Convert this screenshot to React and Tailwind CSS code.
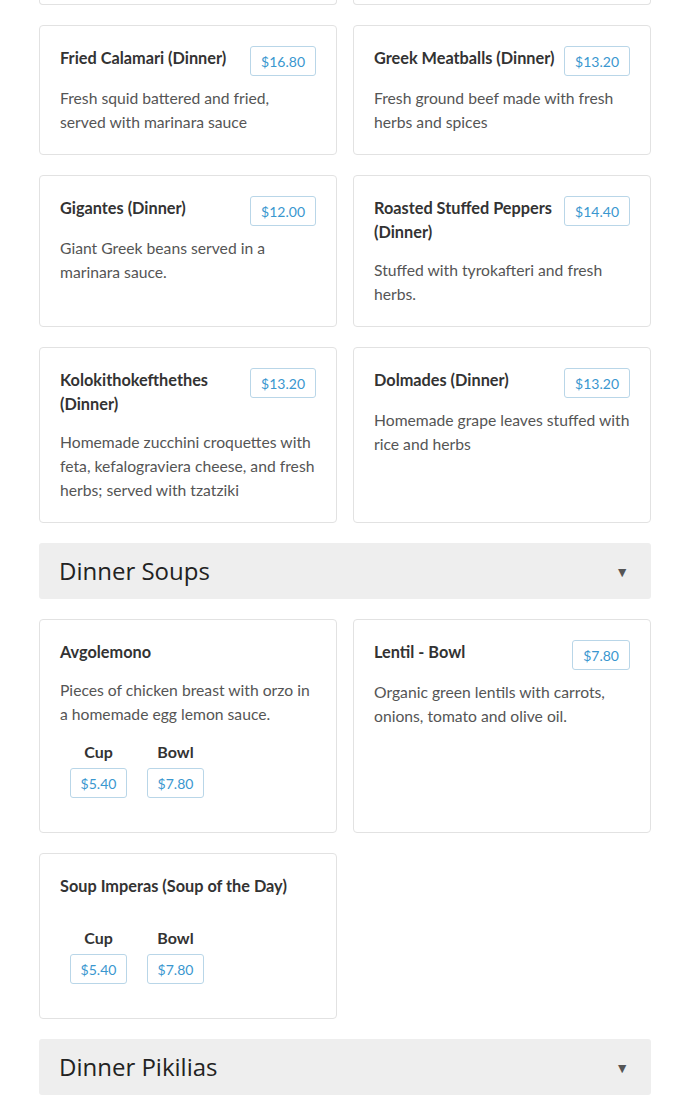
import React from "react";

const dinnerItems = [
	{ name: "Fried Calamari (Dinner)", price: "$16.80", desc: "Fresh squid battered and fried, served with marinara sauce" },
	{ name: "Greek Meatballs (Dinner)", price: "$13.20", desc: "Fresh ground beef made with fresh herbs and spices" },
	{ name: "Gigantes (Dinner)", price: "$12.00", desc: "Giant Greek beans served in a marinara sauce." },
	{ name: "Roasted Stuffed Peppers (Dinner)", price: "$14.40", desc: "Stuffed with tyrokafteri and fresh herbs." },
	{ name: "Kolokithokefthethes (Dinner)", price: "$13.20", desc: "Homemade zucchini croquettes with feta, kefalograviera cheese, and fresh herbs; served with tzatziki" },
	{ name: "Dolmades (Dinner)", price: "$13.20", desc: "Homemade grape leaves stuffed with rice and herbs" },
];

const soupItems = [
	{
		name: "Avgolemono",
		desc: "Pieces of chicken breast with orzo in a homemade egg lemon sauce.",
		sizes: [
			{ label: "Cup", price: "$5.40" },
			{ label: "Bowl", price: "$7.80" },
		],
	},
	{ name: "Lentil - Bowl", price: "$7.80", desc: "Organic green lentils with carrots, onions, tomato and olive oil." },
	{
		name: "Soup Imperas (Soup of the Day)",
		desc: "",
		sizes: [
			{ label: "Cup", price: "$5.40" },
			{ label: "Bowl", price: "$7.80" },
		],
	},
];

const Price = ({ children }) => (
	<span className="inline-flex h-[30px] items-center justify-center rounded-[3px] border border-[#b9d6e8] px-[10px] text-[14px] text-[#3a97cf] whitespace-nowrap">
		{children}
	</span>
);

const ItemCard = ({ item }) => (
	<div className="rounded-[4px] border border-[#e2e2e2] bg-white px-[20px] pt-[20px] pb-[20px]">
		<div className="flex items-start justify-between gap-[8px]">
			<h3 className="text-[16.3px] font-bold leading-[24px] text-[#333]">{item.name}</h3>
			{item.price && (
				<div className="-mb-[4px] shrink-0">
					<Price>{item.price}</Price>
				</div>
			)}
		</div>
		{item.desc ? (
			<p className="mt-[14px] text-[15.7px] leading-[24px] text-[#555]">{item.desc}</p>
		) : (
			<div className="h-[14px]" />
		)}
		{item.sizes && (
			<div className="mt-[14px] mb-[14px] flex gap-[20px] pl-[10px]">
				{item.sizes.map((s) => (
					<div key={s.label} className="flex w-[57px] flex-col items-center">
						<span className="text-[16px] font-bold leading-[24px] text-[#333]">{s.label}</span>
						<div className="mt-[4px]">
							<Price>{s.price}</Price>
						</div>
					</div>
				))}
			</div>
		)}
	</div>
);

const SectionHeader = ({ title }) => (
	<div className="flex h-[56px] items-center justify-between rounded-[3px] bg-[#eeeeee] pl-[20px] pr-[22px]">
		<h2 className="text-[24px] font-medium leading-none text-[#222]" style={{ fontFamily: '"Open Sans", sans-serif' }}>
			{title}
		</h2>
		<span className="text-[14px] text-[#555]">▼</span>
	</div>
);

export default function App() {
	return (
		<div className="min-h-screen bg-white" style={{ fontFamily: "Lato, 'Liberation Sans', sans-serif" }}>
			<div className="ml-[39px] w-[612px]">
				<div className="grid grid-cols-2 gap-x-[16px]">
					<div className="h-[5px] rounded-b-[4px] border border-t-0 border-[#e2e2e2]" />
					<div className="h-[5px] rounded-b-[4px] border border-t-0 border-[#e2e2e2]" />
				</div>

				<div className="mt-[20px] grid grid-cols-2 gap-x-[16px] gap-y-[20px]">
					{dinnerItems.map((item) => (
						<ItemCard key={item.name} item={item} />
					))}
				</div>

				<div className="mt-[20px]">
					<SectionHeader title="Dinner Soups" />
				</div>

				<div className="mt-[20px] grid grid-cols-2 items-stretch gap-x-[16px] gap-y-[20px]">
					{soupItems.map((item) => (
						<ItemCard key={item.name} item={item} />
					))}
				</div>

				<div className="mt-[20px]">
					<SectionHeader title="Dinner Pikilias" />
				</div>
			</div>
		</div>
	);
}
